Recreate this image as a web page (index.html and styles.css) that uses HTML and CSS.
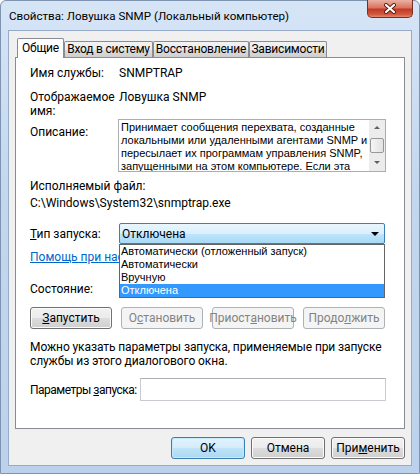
FILE: index.html
```html
<!DOCTYPE html>
<html lang="ru">
<head>
    <meta charset="UTF-8">
    <title>Свойства: Ловушка SNMP (Локальный компьютер)</title>
    <link rel="stylesheet" href="styles.css">
</head>
<body>
<div class="window">
    <div class="titlebar">
        <span class="title">Свойства: Ловушка SNMP (Локальный компьютер)</span>
        <div class="close-btn">
            <svg width="14" height="11" viewBox="0 0 14 11">
                <path d="M3 2 L11 9 M11 2 L3 9" stroke="#5a1a10" stroke-width="4" stroke-linecap="round"/>
                <path d="M3 2 L11 9 M11 2 L3 9" stroke="#ffffff" stroke-width="2.2" stroke-linecap="round"/>
            </svg>
        </div>
    </div>

    <div class="client">
        <div class="tabs">
            <div class="tab active">Общие</div>
            <div class="tab tab-login">Вход в систему</div>
            <div class="tab tab-recovery">Восстановление</div>
            <div class="tab tab-deps">Зависимости</div>
        </div>

        <div class="panel">
            <div class="row row-name">
                <span class="label">Имя службы:</span>
                <span class="value">SNMPTRAP</span>
            </div>
            <div class="row row-display">
                <span class="label">Отображаемое имя:</span>
                <span class="value">Ловушка SNMP</span>
            </div>
            <div class="row row-desc">
                <span class="label label-desc">Описание:</span>
                <div class="desc-box">
                    <div class="desc-text">
                        Принимает сообщения перехвата, созданные<br>
                        локальными или удаленными агентами SNMP и<br>
                        пересылает их программам управления SNMP,<br>
                        запущенными на этом компьютере. Если эта<br>
                        служба остановлена, программы на основе SNMP
                    </div>
                    <div class="scrollbar">
                        <div class="arrow arrow-up"></div>
                        <div class="thumb"></div>
                        <div class="arrow arrow-down"></div>
                    </div>
                </div>
            </div>
            <div class="line line-exe">Исполняемый файл:</div>
            <div class="line line-path">C:\Windows\System32\snmptrap.exe</div>

            <div class="row row-startup">
                <span class="label"><u>Т</u>ип запуска:</span>
                <div class="combo">
                    <span>Отключена</span>
                    <span class="combo-arrow"></span>
                    <ul class="dropdown">
                        <li>Автоматически (отложенный запуск)</li>
                        <li>Автоматически</li>
                        <li>Вручную</li>
                        <li class="selected">Отключена</li>
                    </ul>
                </div>
            </div>

            <div class="line line-help"><a class="link">Помощь при настройке параметров запуска служб.</a></div>
            <div class="line line-state">Состояние:</div>

            <div class="service-buttons">
                <div class="btn"><u>З</u>апустить</div>
                <div class="btn disabled">О<u>с</u>тановить</div>
                <div class="btn disabled">Приост<u>а</u>новить</div>
                <div class="btn disabled">Продо<u>л</u>жить</div>
            </div>

            <p class="hint">Можно указать параметры запуска, применяемые при запуске<br>службы из этого диалогового окна.</p>

            <div class="row row-params">
                <span class="label-params">Параметры <u>з</u>апуска:</span>
                <div class="input"></div>
            </div>
        </div>

        <div class="footer">
            <div class="btn default">OK</div>
            <div class="btn">Отмена</div>
            <div class="btn">При<u>м</u>енить</div>
        </div>
    </div>
</div>
</body>
</html>
```

FILE: styles.css
```css
body {
    margin: 0;
    font-family: Roboto, "Noto Sans", sans-serif;
    font-size: 12px;
    line-height: 14px;
    color: #000;
}
.window {
    width: 420px;
    height: 474px;
    box-sizing: border-box;
    border: 1px solid #7d93b0;
    border-radius: 6px 6px 0 0;
    background: linear-gradient(to bottom, #d6e5f6 0%, #c3d7ee 40%, #bcd2ec 100%);
    display: flex;
    flex-direction: column;
}
.titlebar {
    height: 29px;
    display: flex;
    justify-content: space-between;
    align-items: flex-start;
}
.title {
    padding: 8px 0 0 8px;
    font-size: 11.6px;
}
.close-btn {
    width: 46px;
    height: 18px;
    margin-right: 6px;
    margin-top: -1px;
    box-sizing: border-box;
    border: 1px solid #7b2d22;
    border-top: none;
    border-radius: 0 0 5px 5px;
    background: linear-gradient(to bottom, #eab2a4 0%, #d9745f 45%, #c23a22 55%, #d15a40 85%, #e48a70 100%);
    display: flex;
    align-items: center;
    justify-content: center;
}
.client {
    flex: 1;
    margin: 0 7px 7px 7px;
    border: 1px solid #97abc6;
    background: #f0f0f0;
    padding: 7px 6px 0 6px;
    display: flex;
    flex-direction: column;
}
.tabs {
    display: flex;
    height: 19px;
    margin-left: 2px;
    position: relative;
    z-index: 1;
}
.tab {
    box-sizing: border-box;
    height: 16px;
    margin-top: 3px;
    border: 1px solid #898c95;
    border-bottom: none;
    border-radius: 2px 2px 0 0;
    background: linear-gradient(to bottom, #f3f3f3 0%, #ebebeb 50%, #dddddd 51%, #cfcfcf 100%);
    text-align: center;
    line-height: 15px;
    white-space: nowrap;
    letter-spacing: -0.2px;
}
.tab.active {
    width: 47px;
    height: 20px;
    margin-top: 0;
    background: #fff;
    line-height: 19px;
}
.tab-login { width: 89px; }
.tab-recovery { width: 96px; }
.tab-deps { width: 78px; }

.panel {
    height: 372px;
    box-sizing: border-box;
    border: 1px solid #898c95;
    background: #fff;
    padding: 8px 18px 0 14px;
}
.row {
    display: flex;
}
.label {
    width: 89px;
    flex-shrink: 0;
}
.row-display {
    margin-top: 10px;
}
.row-display .label {
    width: 80px;
    margin-right: 9px;
}
.row-desc {
    margin-top: 1px;
}
.label-desc {
    padding-top: 6px;
}
.desc-box {
    flex: 1;
    min-width: 0;
    margin-left: -1px;
    height: 53px;
    box-sizing: border-box;
    border: 1px solid #abadb3;
    display: flex;
    overflow: hidden;
}
.desc-text {
    flex: 1;
    min-width: 0;
    padding: 1px 0 0 2px;
    font-family: "Liberation Sans", Arial, sans-serif;
    font-size: 11px;
    line-height: 13px;
    white-space: nowrap;
    overflow: hidden;
}
.scrollbar {
    width: 16px;
    flex-shrink: 0;
    background: #ececec;
    display: flex;
    flex-direction: column;
    align-items: center;
}
.arrow {
    width: 0;
    height: 0;
    border-left: 3px solid transparent;
    border-right: 3px solid transparent;
}
.arrow-up {
    margin-top: 6px;
    border-bottom: 3px solid #606060;
}
.arrow-down {
    margin-top: auto;
    margin-bottom: 7px;
    border-top: 3px solid #606060;
}
.thumb {
    width: 14px;
    height: 15px;
    margin-top: 9px;
    box-sizing: border-box;
    border: 1px solid #979797;
    border-radius: 2px;
    background: linear-gradient(to right, #f5f5f5, #e2e2e2);
}
.line-exe {
    margin-top: 7px;
}
.line-path {
    margin-top: 3px;
}
.row-startup {
    margin-top: 13px;
    align-items: center;
}
.combo {
    position: relative;
    flex: 1;
    height: 21px;
    margin-right: 1px;
    box-sizing: border-box;
    border: 1px solid #3c7fb1;
    border-radius: 2px;
    background: linear-gradient(to bottom, #eaf6fd 0%, #d9f0fc 50%, #bee6fd 51%, #a7d9f5 100%);
    padding-left: 2px;
    display: flex;
    align-items: center;
}
.combo-arrow {
    margin-left: auto;
    margin-right: 5px;
    width: 0;
    height: 0;
    border-left: 4px solid transparent;
    border-right: 4px solid transparent;
    border-top: 4px solid #000;
}
.dropdown {
    position: absolute;
    top: 20px;
    left: -1px;
    right: -1px;
    margin: 0;
    padding: 0;
    list-style: none;
    background: #fff;
    border: 1px solid #646464;
    font-family: "Liberation Sans", Arial, sans-serif;
    font-size: 11px;
    line-height: 13px;
}
.dropdown li {
    height: 13px;
    padding-left: 1px;
}
.dropdown li.selected {
    background: #3399ff;
    color: #fff;
}
.line-help {
    margin-top: 6px;
    white-space: nowrap;
    overflow: hidden;
}
.link {
    color: #0066cc;
    text-decoration: underline;
}
.line-state {
    margin-top: 18px;
}
.service-buttons {
    margin-top: 11px;
    display: flex;
    gap: 9px;
}
.service-buttons .btn {
    width: 82px;
}
.btn {
    height: 22px;
    box-sizing: border-box;
    border: 1px solid #707070;
    border-radius: 3px;
    background: linear-gradient(to bottom, #f2f2f2 0%, #ebebeb 50%, #dddddd 51%, #cfcfcf 100%);
    box-shadow: inset 0 0 0 1px #fbfbfb;
    display: flex;
    align-items: center;
    justify-content: center;
}
.btn.disabled {
    border-color: #adb2b5;
    background: #f4f4f4;
    box-shadow: none;
    color: #838383;
}
.btn.default {
    border-color: #3c7fb1;
    background: linear-gradient(to bottom, #e3f3fc 0%, #d3ecfb 50%, #bfe3f8 51%, #acd8f3 100%);
    box-shadow: inset 0 0 0 1px #c5e8fb;
}
.hint {
    margin: 11px 0 0 0;
    white-space: nowrap;
    letter-spacing: -0.1px;
}
.row-params {
    margin-top: 10px;
    align-items: center;
}
.label-params {
    width: 110px;
    flex-shrink: 0;
    white-space: nowrap;
    letter-spacing: -0.5px;
}
.input {
    flex: 1;
    height: 23px;
    box-sizing: border-box;
    border: 1px solid #c9cbd1;
    border-top-color: #abadb3;
}
.footer {
    padding-top: 8px;
    display: flex;
    justify-content: flex-end;
    gap: 6px;
}
.footer .btn {
    width: 74px;
}
```
